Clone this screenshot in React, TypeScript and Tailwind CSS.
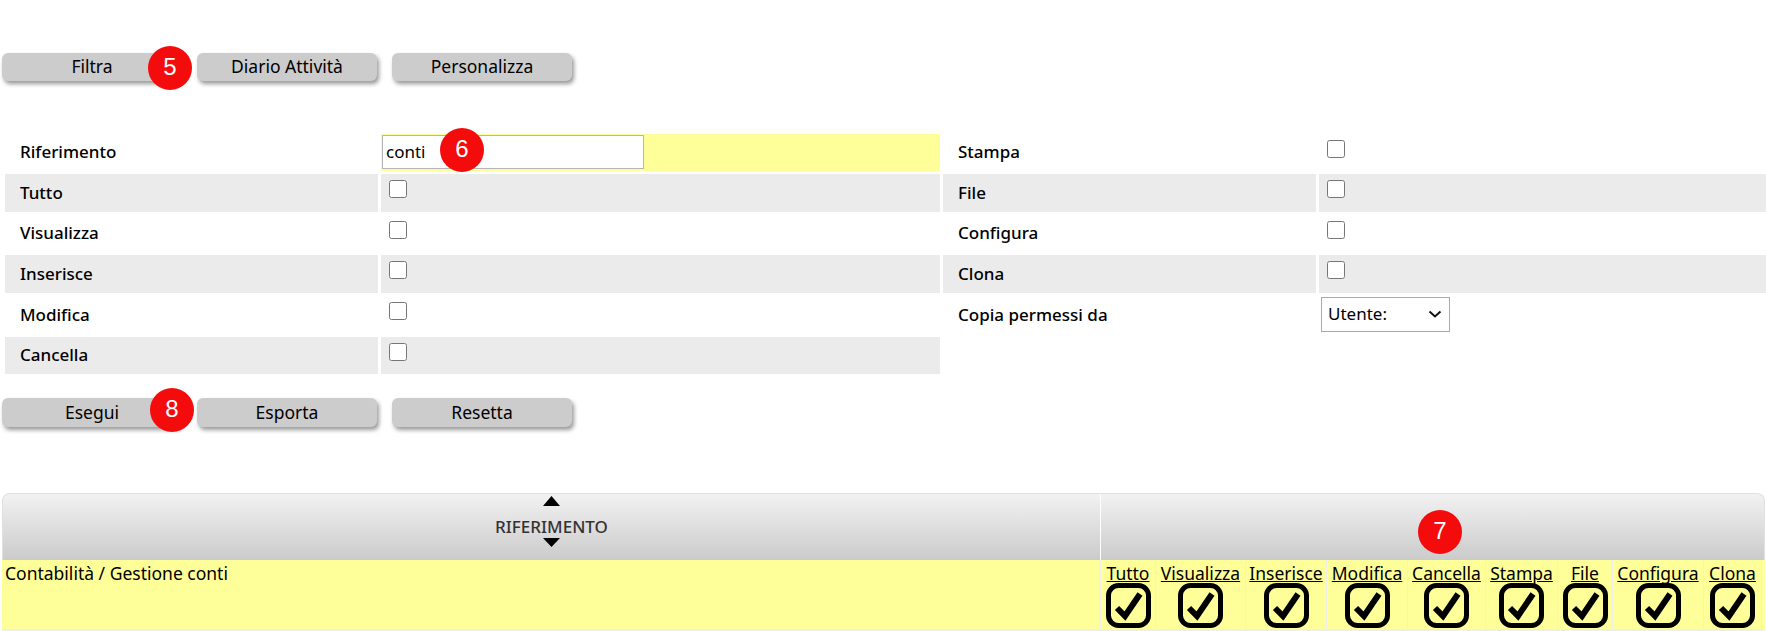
import React from "react";

const font = "font-['Noto_Sans',sans-serif]";

function Btn({ label, tall }: { label: string; tall?: boolean }) {
  return (
    <button
      className={
        "w-[180px] rounded-[6px] bg-[#cccccc] text-[17.5px] leading-[22px] pb-[2px] text-black shadow-[2px_3px_4px_#999999] " +
        (tall ? "h-[29px]" : "h-[28px]")
      }
    >
      {label}
    </button>
  );
}

function Badge({ n, className }: { n: string; className: string }) {
  return (
    <span
      className={
        "absolute w-[44px] h-[44px] rounded-full bg-[#f40c0c] text-white flex items-center justify-center pb-[2px] text-[24px] font-['Liberation_Sans',sans-serif] " +
        className
      }
    >
      {n}
    </span>
  );
}

function Label({ text, shade }: { text: string; shade?: boolean }) {
  return (
    <div className={"h-full flex items-center pl-[15px] pb-[1px] text-[17px] font-medium text-black " + (shade ? "bg-[#ebebeb]" : "")}>
      {text}
    </div>
  );
}

function Check({ shade }: { shade?: boolean }) {
  return (
    <div className={"h-full pl-[8px] pt-[6px] " + (shade ? "bg-[#ebebeb]" : "")}>
      <input type="checkbox" className="w-[18px] h-[18px] m-0 block" />
    </div>
  );
}

function CheckIcon() {
  return (
    <svg viewBox="0 0 45 45" className="w-[45px] h-[45px] block">
      <rect x="2.5" y="2.5" width="40" height="40" rx="10" fill="none" stroke="#000" strokeWidth="5" />
      <path d="M11 25 L19 33 L34 11" fill="none" stroke="#000" strokeWidth="6" />
    </svg>
  );
}

const cols = [
  ["Tutto", 54],
  ["Visualizza", 89],
  ["Inserisce", 80],
  ["Modifica", 80],
  ["Cancella", 77],
  ["Stampa", 71],
  ["File", 54],
  ["Configura", 90],
  ["Clona", 57],
] as const;

export default function App() {
  return (
    <div className={font + " relative w-[1766px] h-[631px] overflow-hidden bg-white text-[17px]"}>
      <div className="flex gap-[15px] pl-[2px] pt-[53px]">
        <Btn label="Filtra" />
        <Btn label="Diario Attività" />
        <Btn label="Personalizza" />
      </div>
      <Badge n="5" className="left-[148px] top-[46px]" />

      <div className="grid grid-cols-[373px_559px_373px_447px] grid-rows-[37px_38px_37px_38px_38px_37px] gap-x-[3px] gap-y-[3px] pl-[5px] mt-[53px]">
        <Label text="Riferimento" />
        <div className="h-full bg-[#ffff99] pt-px pl-px">
          <input
            readOnly
            value="conti"
            className="w-[262px] h-[34px] bg-white border border-[#b5b5b5] pl-[3px] pb-[2px] text-[17px] text-black outline-none block"
          />
        </div>
        <Label text="Stampa" />
        <Check />

        <Label text="Tutto" shade />
        <Check shade />
        <Label text="File" shade />
        <Check shade />

        <Label text="Visualizza" />
        <Check />
        <Label text="Configura" />
        <Check />

        <Label text="Inserisce" shade />
        <Check shade />
        <Label text="Clona" shade />
        <Check shade />

        <Label text="Modifica" />
        <Check />
        <Label text="Copia permessi da" />
        <div className="h-full pl-[2px] pt-[1px]">
          <div className="relative w-[129px] h-[35px]">
            <select className="appearance-none w-full h-full bg-white border border-[#aaaaaa] text-[17px] pl-[6px] pb-[2px] text-black block">
              <option>Utente:</option>
            </select>
            <svg viewBox="0 0 14 8" className="absolute right-[8px] top-[13px] w-[14px] h-[8px]">
              <path d="M1.5 1.5 L7 6.5 L12.5 1.5" fill="none" stroke="#111" strokeWidth="2" />
            </svg>
          </div>
        </div>

        <Label text="Cancella" shade />
        <Check shade />
      </div>
      <Badge n="6" className="left-[440px] top-[128px]" />

      <div className="flex gap-[15px] pl-[2px] mt-[24px]">
        <Btn tall label="Esegui" />
        <Btn tall label="Esporta" />
        <Btn tall label="Resetta" />
      </div>
      <Badge n="8" className="left-[150px] top-[388px]" />

      <div className="ml-[2px] w-[1763px] mt-[66px]">
        <div className="flex h-[67px] rounded-t-[8px] border border-b-0 border-[#e0e0e0] bg-gradient-to-b from-[#f2f2f2] to-[#cbcbcb]">
          <div className="w-[1098px] border-r border-white flex flex-col items-center pt-[2px] text-[17px] font-medium text-[#333333]">
            <svg viewBox="0 0 17 10" className="w-[17px] h-[10px] shrink-0">
              <path d="M8.5 0 L17 10 L0 10 Z" fill="#000" />
            </svg>
            <span className="mt-[10px] h-[22px] leading-[22px]">RIFERIMENTO</span>
            <svg viewBox="0 0 17 9" className="w-[17px] h-[9px] shrink-0">
              <path d="M0 0 L17 0 L8.5 9 Z" fill="#000" />
            </svg>
          </div>
          <div className="flex-1" />
        </div>
        <div className="flex h-[71px] bg-[#eeeeee]">
          <div className="w-[1098px] h-[69px] bg-[#ffff99] pl-[3px] pt-[2px] text-[17.5px] text-black leading-[22px]">
            Contabilità / Gestione conti
          </div>
          <div className="flex flex-1 h-[69px] gap-px pl-px">
            {cols.map(([name, w]) => (
              <div key={name} className="bg-[#ffff99] flex flex-col items-center pt-[3px]" style={{ width: w }}>
                <a className="underline text-[17.5px] leading-[20px] text-black whitespace-nowrap">{name}</a>
                <CheckIcon />
              </div>
            ))}
            <div className="flex-1 bg-[#ffff99]" />
          </div>
        </div>
      </div>
      <Badge n="7" className="left-[1418px] top-[510px]" />
    </div>
  );
}
